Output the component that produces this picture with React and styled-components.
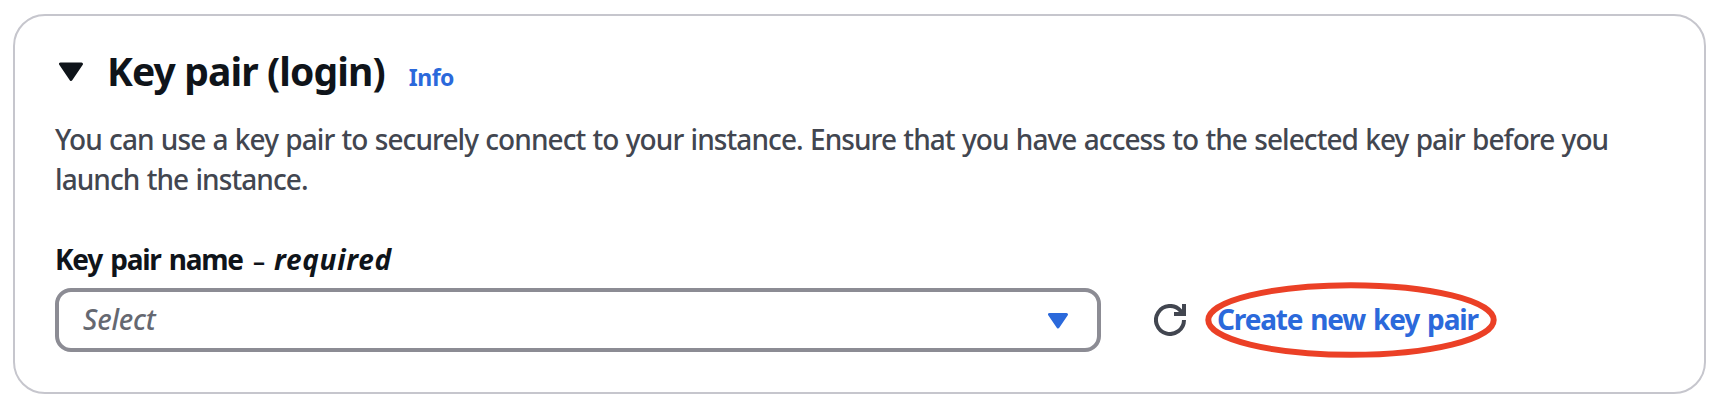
import React from 'react';
import styled, { createGlobalStyle } from 'styled-components';

const App = () => {
  return (
    <Page>
      <GlobalStyle />
      <Card>
        <Header>
          <Triangle width="24" height="20" viewBox="0 0 24 20" $color="#0f141a">
            <path d="M1.5 2H22.5L12 17.5Z" />
          </Triangle>
          <Title>Key pair (login)</Title>
          <InfoLink>Info</InfoLink>
        </Header>
        <Description>
          You can use a key pair to securely connect to your instance. Ensure that you have access to the
          selected key pair before you launch the instance.
        </Description>
        <Label>
          Key pair name <Dash>–</Dash> <Required>required</Required>
        </Label>
        <Field>
          <Select>
            <Placeholder>Select</Placeholder>
            <Triangle width="20" height="16" viewBox="0 0 20 16" $color="#2b69db">
              <path d="M1.5 1.5H18.5L10 14Z" />
            </Triangle>
          </Select>
          <RefreshButton>
            <svg width="32" height="32" viewBox="0 0 32 32" fill="none" stroke="#424650" strokeWidth="4">
              <path d="M30 16A14 14 0 1 1 26.5 6.7L28 9" />
              <path d="M20 10H30V0" />
            </svg>
          </RefreshButton>
          <CreateLink>
            Create new key pair
            <Highlight viewBox="0 0 292 76">
              <ellipse cx="146" cy="38" rx="142.7" ry="34.8" />
            </Highlight>
          </CreateLink>
        </Field>
      </Card>
    </Page>
  );
};

const GlobalStyle = createGlobalStyle`
  * {
    box-sizing: border-box;
  }

  body {
    margin: 0;
    background: #ffffff;
    font-family: 'Noto Sans', 'Open Sans', sans-serif;
  }
`;

const Page = styled.div`
  height: 408px;
  padding: 14px 16px 14px 13px;
`;

const Card = styled.div`
  height: 380px;
  padding: 31px 40px;
  border: 2px solid #c6c6cd;
  border-radius: 32px;
`;

const Header = styled.div`
  display: flex;
  align-items: baseline;
  height: 48px;
  padding-left: 4px;
  line-height: 48px;
`;

const Triangle = styled.svg`
  flex: none;
  align-self: center;
  margin-top: 1px;
  fill: ${(props) => props.$color};
  stroke: ${(props) => props.$color};
  stroke-width: 3;
  stroke-linejoin: round;
`;

const Title = styled.h2`
  margin: 0 0 0 24px;
  color: #0f141a;
  font-size: 39px;
  font-weight: 700;
  letter-spacing: -0.9px;
`;

const InfoLink = styled.a`
  margin-left: 24px;
  color: #2b69db;
  font-size: 23px;
  font-weight: 700;
  letter-spacing: -0.5px;
`;

const Description = styled.p`
  margin: 24px 0 0;
  color: #424650;
  font-size: 28px;
  font-weight: 500;
  line-height: 40px;
  letter-spacing: -0.92px;
  word-spacing: 0.85px;
`;

const Label = styled.div`
  margin-top: 40px;
  color: #0f141a;
  font-size: 28px;
  font-weight: 700;
  line-height: 40px;
  letter-spacing: -1.25px;
  word-spacing: 2.2px;
`;

const Dash = styled.span`
  margin: 0 2px;
  font-size: 24px;
  line-height: 1;
`;

const Required = styled.i`
  letter-spacing: 0.7px;
`;

const Field = styled.div`
  display: flex;
  align-items: center;
  margin-top: 9px;
`;

const Select = styled.div`
  display: flex;
  align-items: center;
  justify-content: space-between;
  width: 1046px;
  height: 64px;
  padding: 0 29px 0 24px;
  border: 4px solid #8c8c94;
  border-radius: 16px;
`;

const Placeholder = styled.span`
  padding-bottom: 2px;
  color: #656871;
  font-size: 28px;
  font-style: italic;
  font-weight: 500;
  letter-spacing: -0.2px;
`;

const RefreshButton = styled.button`
  display: flex;
  margin-left: 53px;
  padding: 0;
  border: none;
  background: none;
`;

const CreateLink = styled.a`
  position: relative;
  margin-left: 31px;
  padding-bottom: 2px;
  color: #2b69db;
  font-size: 28px;
  font-weight: 700;
  line-height: 40px;
  letter-spacing: -1.15px;
  word-spacing: 1.8px;
  white-space: nowrap;
`;

const Highlight = styled.svg`
  position: absolute;
  top: -17.5px;
  left: -12px;
  width: 292px;
  height: 76px;
  fill: none;
  stroke: #eb4026;
  stroke-width: 6;
  pointer-events: none;
`;

export default App;
